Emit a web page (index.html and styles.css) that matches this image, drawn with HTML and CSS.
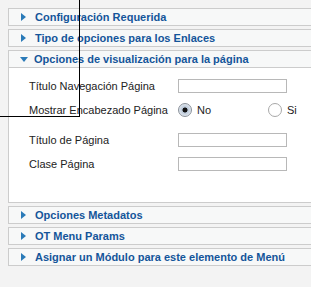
FILE: index.html
```html
<!DOCTYPE html>
<html>
<head>
<meta charset="utf-8">
<link rel="stylesheet" href="styles.css">
</head>
<body>
<div class="panes">
  <div class="pane">
    <div class="toggler"><span class="arrow right"></span>Configuración Requerida</div>
  </div>
  <div class="pane">
    <div class="toggler"><span class="arrow right"></span>Tipo de opciones para los Enlaces</div>
  </div>
  <div class="pane open">
    <div class="toggler"><span class="arrow down"></span>Opciones de visualización para la página</div>
    <div class="content">
      <div class="row">
        <label class="lbl">Título Navegación Página</label>
        <input class="txt" type="text">
      </div>
      <div class="row">
        <label class="lbl">Mostrar Encabezado Página</label>
        <div class="radios">
          <span class="opt first"><span class="radio checked"></span>No</span>
          <span class="opt"><span class="radio"></span>Si</span>
        </div>
      </div>
      <div class="spacer"></div>
      <div class="row">
        <label class="lbl">Título de Página</label>
        <input class="txt" type="text">
      </div>
      <div class="row">
        <label class="lbl">Clase Página</label>
        <input class="txt" type="text">
      </div>
    </div>
  </div>
  <div class="pane">
    <div class="toggler"><span class="arrow right"></span>Opciones Metadatos</div>
  </div>
  <div class="pane">
    <div class="toggler"><span class="arrow right"></span>OT Menu Params</div>
  </div>
  <div class="pane">
    <div class="toggler"><span class="arrow right"></span>Asignar un Módulo para este elemento de Menú</div>
  </div>
</div>
<div class="overlay"></div>
</body>
</html>
```
FILE: styles.css
```css
html { overflow: hidden; }
body {
  margin: 8px;
  background: #f3f3f3;
  font-family: "Liberation Sans", Arial, sans-serif;
  width: 400px;
}
.panes {
  display: flex;
  flex-direction: column;
  gap: 3px;
}
.pane {
  border: 1px solid #cccccc;
  background: #f7f8f8;
}
.toggler {
  height: 16px;
  display: flex;
  align-items: center;
  padding-left: 12px;
  font-size: 11px;
  font-weight: bold;
  color: #14559a;
  white-space: nowrap;
}
.arrow {
  width: 0;
  height: 0;
}
.arrow.right {
  border-top: 4px solid transparent;
  border-bottom: 4px solid transparent;
  border-left: 5px solid #2a7ab8;
  margin-right: 9px;
}
.arrow.down {
  border-left: 4px solid transparent;
  border-right: 4px solid transparent;
  border-top: 5px solid #2a7ab8;
  margin-left: -1px;
  margin-right: 6px;
}
.open .toggler { border-bottom: 1px solid #cccccc; }
.content {
  background: #fff;
  padding: 6px 0 26px 20px;
}
.row {
  height: 24px;
  display: flex;
  align-items: center;
}
.spacer { height: 6px; }
.lbl {
  width: 149px;
  font-size: 11px;
  color: #222;
}
.txt {
  box-sizing: border-box;
  width: 109px;
  height: 14px;
  margin: 0;
  border: 1px solid #b8b8b8;
  background: #fff;
  padding: 0;
}
.radios {
  display: flex;
  font-size: 11px;
  color: #222;
}
.opt {
  display: flex;
  align-items: center;
}
.opt.first { width: 90px; }
.radio {
  box-sizing: border-box;
  width: 14px;
  height: 14px;
  border-radius: 50%;
  border: 1px solid #a8a8a8;
  background: #fff;
  margin-right: 5px;
  margin-left: 0;
}
.radio.checked {
  border-color: #8a9099;
  background: radial-gradient(circle, #111 0 2.2px, #b9c6d6 2.8px, #dfe6ee 6px);
}
.overlay {
  position: absolute;
  left: -1px;
  top: -1px;
  width: 81px;
  height: 118px;
  box-sizing: border-box;
  border: 1px solid #000;
}
```
